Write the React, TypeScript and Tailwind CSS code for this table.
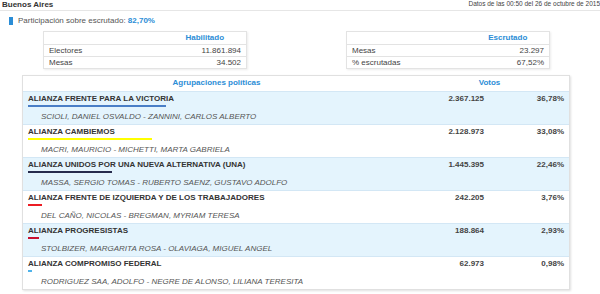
const partidos = [
  { name: "ALIANZA FRENTE PARA LA VICTORIA", cands: "SCIOLI, DANIEL OSVALDO - ZANNINI, CARLOS ALBERTO", votos: "2.367.125", pct: 36.78, color: "#4a7ec6" },
  { name: "ALIANZA CAMBIEMOS", cands: "MACRI, MAURICIO - MICHETTI, MARTA GABRIELA", votos: "2.128.973", pct: 33.08, color: "#ffff00" },
  { name: "ALIANZA UNIDOS POR UNA NUEVA ALTERNATIVA (UNA)", cands: "MASSA, SERGIO TOMAS - RUBERTO SAENZ, GUSTAVO ADOLFO", votos: "1.445.395", pct: 22.46, color: "#262b4d" },
  { name: "ALIANZA FRENTE DE IZQUIERDA Y DE LOS TRABAJADORES", cands: "DEL CAÑO, NICOLAS - BREGMAN, MYRIAM TERESA", votos: "242.205", pct: 3.76, color: "#ec1c24" },
  { name: "ALIANZA PROGRESISTAS", cands: "STOLBIZER, MARGARITA ROSA - OLAVIAGA, MIGUEL ANGEL", votos: "188.864", pct: 2.93, color: "#c8102e" },
  { name: "ALIANZA COMPROMISO FEDERAL", cands: "RODRIGUEZ SAA, ADOLFO - NEGRE DE ALONSO, LILIANA TERESITA", votos: "62.973", pct: 0.98, color: "#4fb3ea" },
];

function fmtPct(p: number) {
  return p.toFixed(2).replace(".", ",") + "%";
}

function MiniTable({ title, rows }: { title: string; rows: [string, string][] }) {
  return (
    <table className="w-[204px] border-collapse border border-[#e3e3e3] shadow-[1px_1px_2px_rgba(0,0,0,0.08)] text-[8px] leading-[11px]">
      <thead>
        <tr className="h-[12px]">
          <th className="w-[120px]" />
          <th className="text-center font-bold text-[#2b8dd6] pb-[1px]">{title}</th>
        </tr>
      </thead>
      <tbody>
        {rows.map(([label, value]) => (
          <tr key={label} className="h-[12px] border-t border-[#e3e3e3]">
            <td className="pl-[5px] text-[#444]">{label}</td>
            <td className="pr-[5px] text-right text-[#444]">{value}</td>
          </tr>
        ))}
      </tbody>
    </table>
  );
}

export default function App() {
  return (
    <div className="w-[600px] h-[294px] bg-white overflow-hidden font-['Liberation_Sans',Arial,sans-serif] text-[#333]">
      {/* Encabezado */}
      <div className="flex justify-between h-[11px] border-b border-[#e6e6e6]">
        <span className="pl-[2px] text-[8px] leading-[9px] font-bold text-[#333]">Buenos Aires</span>
        <span className="text-[6.5px] leading-[8px] text-[#444]">Datos de las 00:50 del 26 de octubre de 2015</span>
      </div>

      <div className="flex items-center h-[9px] mt-[5px] pl-[9px] gap-[5px]">
        <div className="w-[4px] h-[8px] bg-[#2b8dd6]" />
        <span className="text-[8px] leading-[9px] text-[#555]">
          Participación sobre escrutado: <b className="text-[#2b8dd6]">82,70%</b>
        </span>
      </div>

      <div className="flex pl-[43px] gap-[99px] mt-[6px]">
        <MiniTable title="Habilitado" rows={[["Electores", "11.861.894"], ["Mesas", "34.502"]]} />
        <MiniTable title="Escrutado" rows={[["Mesas", "23.297"], ["% escrutadas", "67,52%"]]} />
      </div>

      {/* Resultados */}
      <div className="ml-[22px] mt-[6px] w-[548px] border border-[#e0e0e0] shadow-[1px_1px_2px_rgba(0,0,0,0.12)]">
        <table className="w-full border-collapse text-[8px]">
          <thead>
            <tr className="h-[15px]">
              <th className="w-[387px] text-center font-bold text-[#2b8dd6] leading-[10px]">Agrupaciones políticas</th>
              <th colSpan={2} className="text-center font-bold text-[#2b8dd6] leading-[10px]">Votos</th>
            </tr>
          </thead>
          <tbody>
            {partidos.map((p, i) => (
              <tr key={p.name} className={`h-[33px] border-t border-[#d3e7f5] align-top ${i % 2 === 0 ? "bg-[#e4f4fd]" : "bg-white"}`}>
                <td className="pl-[5px] pt-[2px]">
                  <div className="font-bold text-[#333] leading-[10px]">{p.name}</div>
                  <div className="mt-[1px] h-[2px]" style={{ width: `${p.pct * 3.76}px`, background: p.color }} />
                  <div className="mt-[5px] pl-[13px] italic text-[#555] leading-[10px]">{p.cands}</div>
                </td>
                <td className="w-[79px] pt-[2px] pr-[5px] text-right font-bold text-[#444] leading-[10px]">{p.votos}</td>
                <td className="pt-[2px] pr-[5px] text-right font-bold text-[#444] leading-[10px]">{fmtPct(p.pct)}</td>
              </tr>
            ))}
          </tbody>
        </table>
      </div>
    </div>
  );
}
